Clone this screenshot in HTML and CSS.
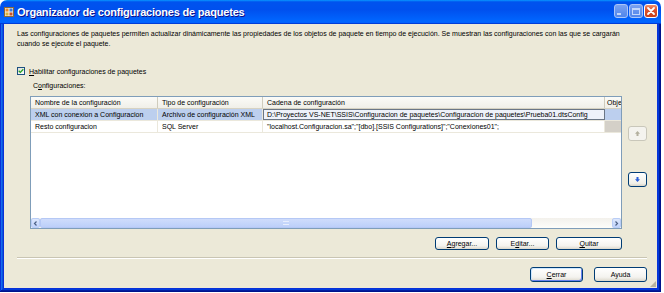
FILE: index.html
```html
<!DOCTYPE html>
<html lang="es">
<head>
<meta charset="utf-8">
<title>Organizador de configuraciones de paquetes</title>
<link rel="stylesheet" href="styles.css">
</head>
<body>
<div class="window">
  <div class="titlebar">
    <svg class="app-icon" width="10" height="10" viewBox="0 0 10 10">
      <rect x="0.5" y="0.5" width="9" height="9" fill="#f4efe0" stroke="#8a6a3a"/>
      <rect x="1.5" y="1.5" width="3" height="3" fill="#e8892a"/>
      <rect x="5.5" y="1.5" width="3" height="3" fill="#3b78d8"/>
      <rect x="1.5" y="5.5" width="3" height="3" fill="#d9b23a"/>
      <rect x="5.5" y="5.5" width="3" height="3" fill="#c8502a"/>
    </svg>
    <span class="title">Organizador de configuraciones de paquetes</span>
    <div class="title-controls">
      <span class="tb tb-min"><span class="glyph-min"></span></span>
      <span class="tb tb-max"><span class="glyph-max"></span></span>
      <span class="tb tb-close">
        <svg width="10" height="10" viewBox="0 0 10 10"><path d="M2 2 L8 8 M8 2 L2 8" stroke="#fff" stroke-width="1.8" stroke-linecap="round"/></svg>
      </span>
    </div>
  </div>
  <div class="frame">
    <div class="client">
      <p class="desc">Las configuraciones de paquetes permiten actualizar dinámicamente las propiedades de los objetos de paquete en tiempo de ejecución. Se muestran las configuraciones con las que se cargarán<br>cuando se ejecute el paquete.</p>
      <div class="check-row">
        <span class="checkbox">
          <svg width="6" height="6" viewBox="0 0 6 6"><path d="M0.7 2.8 L2.3 4.4 L5.3 1.2" fill="none" stroke="#21a121" stroke-width="1.3"/></svg>
        </span>
        <span><u>H</u>abilitar configuraciones de paquetes</span>
      </div>
      <div class="config-section">
        <div class="config-label">C<u>o</u>nfiguraciones:</div>
        <div class="grid-area">
          <div class="grid">
            <div class="grid-body">
              <div class="row header">
                <div class="cell c1">Nombre de la configuración</div>
                <div class="cell c2">Tipo de configuración</div>
                <div class="cell c3">Cadena de configuración</div>
                <div class="cell c4">Obje</div>
              </div>
              <div class="row selected">
                <div class="cell c1">XML con conexion a Configuracion</div>
                <div class="cell c2">Archivo de configuración XML</div>
                <div class="cell c3 focus">D:\Proyectos VS-NET\SSIS\Configuracion de paquetes\Configuracion de paquetes\Prueba01.dtsConfig</div>
                <div class="cell c4"></div>
              </div>
              <div class="row">
                <div class="cell c1">Resto configuracion</div>
                <div class="cell c2">SQL Server</div>
                <div class="cell c3">"localhost.Configuracion.sa";"[dbo].[SSIS Configurations]";"Conexiones01";</div>
                <div class="cell c4 readonly"></div>
              </div>
            </div>
            <div class="hscroll">
              <span class="sb-btn">
                <svg width="5" height="5" viewBox="0 0 5 5"><path d="M3.5 0.5 L1.5 2.5 L3.5 4.5" fill="none" stroke="#4d6185" stroke-width="1.2"/></svg>
              </span>
              <span class="sb-thumb"><span class="grip"></span></span>
              <span class="sb-track"></span>
              <span class="sb-btn">
                <svg width="5" height="5" viewBox="0 0 5 5"><path d="M1.5 0.5 L3.5 2.5 L1.5 4.5" fill="none" stroke="#4d6185" stroke-width="1.2"/></svg>
              </span>
            </div>
          </div>
          <div class="side-buttons">
            <span class="move-btn disabled">
              <svg width="7" height="7" viewBox="0 0 7 7"><path d="M3.5 1 L6 3.8 H4.5 V6 H2.5 V3.8 H1 Z" fill="#b3b09e"/></svg>
            </span>
            <span class="move-btn">
              <svg width="7" height="7" viewBox="0 0 7 7"><path d="M3.5 6 L6 3.2 H4.5 V1 H2.5 V3.2 H1 Z" fill="#2b5fd9"/></svg>
            </span>
          </div>
        </div>
        <div class="actions">
          <span class="btn w-agregar"><u>A</u>gregar...</span>
          <span class="btn w-editar">E<u>d</u>itar...</span>
          <span class="btn w-quitar"><u>Q</u>uitar</span>
        </div>
      </div>
      <div class="separator"></div>
      <div class="footer">
        <span class="btn big default"><u>C</u>errar</span>
        <span class="btn big">Ayuda</span>
      </div>
      <span class="grip-corner"></span>
    </div>
  </div>
</div>
</body>
</html>
```
FILE: styles.css
```css
* { box-sizing: border-box; }
body {
  margin: 0;
  background: #ffffff;
  font-family: "Liberation Sans", Arial, sans-serif;
  font-size: 7px;
  color: #000;
}
.window {
  width: 661px;
  height: 292px;
  display: flex;
  flex-direction: column;
}
.titlebar {
  height: 24px;
  flex: none;
  display: flex;
  align-items: center;
  padding: 0 3px 0 4px;
  border-radius: 7px 7px 0 0;
  background: linear-gradient(180deg, #0997ff, #0053ee 8%, #0050ee 40%, #0066ff 88%, #0066ff 93%, #005bff 95%, #003dd7 96%, #003dd7);
}
.app-icon { flex: none; margin-right: 3px; margin-top: -1px; }
.title {
  color: #fff;
  font-size: 11px;
  font-weight: bold;
  letter-spacing: -0.2px;
  text-shadow: 1px 1px #0f1089;
}
.title-controls {
  margin-left: auto;
  display: flex;
  gap: 1px;
  margin-top: -2px;
}
.tb {
  width: 14px;
  height: 14px;
  border: 1px solid #fff;
  border-radius: 3px;
  display: flex;
  align-items: center;
  justify-content: center;
  position: relative;
}
.tb-min, .tb-max {
  background: linear-gradient(180deg, #8fb0f2, #5f8eea);
  border-color: #c8d8fa;
  opacity: 0.85;
}
.glyph-min {
  width: 4px; height: 2px; background: #e6eefe;
  margin-top: 6px; margin-right: 4px;
}
.glyph-max {
  width: 8px; height: 7px; border: 1px solid #e6eefe; border-top-width: 2px;
}
.tb-close {
  background: linear-gradient(180deg, #f0906e, #e0522c 40%, #c8401c);
}
.frame {
  flex: 1;
  display: flex;
  padding: 0 4px 4px;
  background: #0831d9;
  box-shadow: inset -1px -1px #00138c, inset 1px 0 #0831d9, inset -2px -2px #001ea0, inset 2px 0 #166aee, inset -3px -3px #003bda, inset 3px 0 #0855dd;
}
.client {
  flex: 1;
  background: #ece9d8;
  padding: 5px 10px 0 13px;
  display: flex;
  flex-direction: column;
  position: relative;
}
.desc {
  margin: 0;
  line-height: 10px;
  white-space: nowrap;
}
.check-row {
  margin-top: 17px;
  height: 10px;
  display: flex;
  align-items: center;
  gap: 4px;
  padding-left: 0;
}
.checkbox {
  width: 8px;
  height: 8px;
  border: 1px solid #1c5180;
  background: linear-gradient(135deg, #dcdcd7, #ffffff);
  display: flex;
  align-items: center;
  justify-content: center;
}
.config-section {
  margin-left: 13px;
  display: flex;
  flex-direction: column;
}
.config-label {
  margin-top: 5px;
  height: 10px;
  line-height: 10px;
  padding-left: 3px;
}
.grid-area {
  margin-top: 5px;
  display: grid;
  grid-template-columns: 592px 19px;
  column-gap: 6px;
}
.grid {
  height: 133px;
  border: 1px solid #7f9db9;
  background: #fff;
  display: flex;
  flex-direction: column;
  overflow: hidden;
}
.grid-body { flex: 1; overflow: hidden; }
.row {
  display: flex;
  height: 12px;
  border-bottom: 1px solid #ebe8dc;
}
.cell {
  flex: none;
  padding: 0 4px;
  line-height: 11px;
  white-space: nowrap;
  overflow: hidden;
  border-right: 1px solid #ebe8dc;
}
.c1 { width: 127px; }
.c2 { width: 105px; }
.c3 { width: 342px; }
.c4 { width: 16px; padding: 0 2px; border-right: none; }
.header { background: linear-gradient(180deg, #fbfbf8, #f0efe8); border-bottom: 1px solid #d6d2c2; }
.header .cell { border-right: 1px solid #cfccbd; }
.header .c4 { border-right: none; }
.selected .cell { background: #bccfee; }
.selected .focus {
  background: #eef2fa;
  outline: 1px solid #6a7686;
  outline-offset: -1px;
}
.readonly { background: #d4d0c8; }
.hscroll {
  height: 10px;
  flex: none;
  display: flex;
  background: #f4f3ee;
}
.sb-btn {
  width: 9px;
  height: 10px;
  flex: none;
  background: linear-gradient(180deg, #dde7fc, #c1d3fb);
  border: 1px solid #b9cdf6;
  border-radius: 2px;
  display: flex;
  align-items: center;
  justify-content: center;
}
.sb-thumb {
  width: 492px;
  flex: none;
  background: linear-gradient(180deg, #cfdcfb, #bccff9);
  border: 1px solid #b5c8f5;
  border-radius: 2px;
  display: flex;
  align-items: center;
  justify-content: center;
}
.grip { width: 6px; height: 4px; border-top: 1px solid #e8eefd; border-bottom: 1px solid #e8eefd; }
.sb-track { flex: 1; background: linear-gradient(180deg, #f3f1ec, #fdfdfa); }
.side-buttons {
  display: flex;
  flex-direction: column;
  padding-top: 30px;
  gap: 31px;
}
.move-btn {
  width: 19px;
  height: 15px;
  border: 1px solid #003c74;
  border-radius: 3px;
  background: linear-gradient(180deg, #ffffff, #f0efe8 80%, #d8d3c6);
  display: flex;
  align-items: center;
  justify-content: center;
}
.move-btn.disabled {
  border-color: #c9c7ba;
  background: #f4f3ee;
}
.actions {
  margin-top: 8px;
  display: flex;
  justify-content: flex-end;
  gap: 7px;
  padding-right: 25px;
}
.btn {
  height: 13px;
  border: 1px solid #003c74;
  border-radius: 3px;
  background: linear-gradient(180deg, #ffffff, #f4f3ef 70%, #dcd8cc);
  display: flex;
  align-items: center;
  justify-content: center;
  line-height: 1;
}
.w-agregar { width: 54px; }
.w-editar { width: 53px; }
.w-quitar { width: 66px; }
.separator {
  margin-top: 7px;
  height: 2px;
  border-top: 1px solid #c9c5b3;
  border-bottom: 1px solid #ffffff;
  margin-right: 0;
}
.footer {
  margin-top: 8px;
  display: flex;
  justify-content: flex-end;
  gap: 11px;
}
.btn.big { width: 53px; height: 15px; }
.btn.default { box-shadow: inset 1px 1px #cee7ff, inset -1px -1px #6982ee; }
.grip-corner {
  position: absolute;
  right: 1px;
  bottom: 1px;
  width: 6px;
  height: 6px;
  background: radial-gradient(circle, #b7b39f 0.8px, transparent 1px) 0 0 / 2px 2px;
  clip-path: polygon(100% 0, 100% 100%, 0 100%);
}
```
